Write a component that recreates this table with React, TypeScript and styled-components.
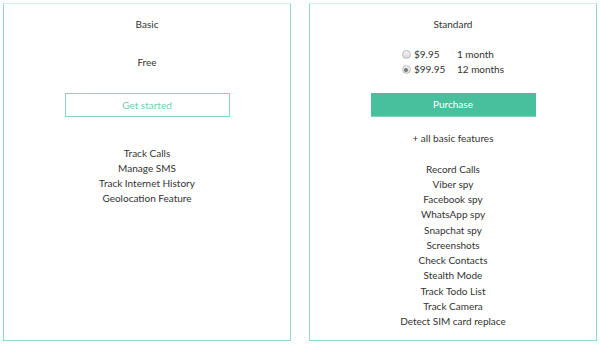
import React, { useState } from "react";
import styled, { createGlobalStyle, css } from "styled-components";

const GlobalStyle = createGlobalStyle`
  html, body {
    margin: 0;
    padding: 0;
    background: #fff;
  }
  body {
    font-family: Lato, "Open Sans", "Liberation Sans", sans-serif;
    color: #333;
  }
`;

const basicFeatures = [
  "Track Calls",
  "Manage SMS",
  "Track Internet History",
  "Geolocation Feature",
];

const standardFeatures = [
  "Record Calls",
  "Viber spy",
  "Facebook spy",
  "WhatsApp spy",
  "Snapchat spy",
  "Screenshots",
  "Check Contacts",
  "Stealth Mode",
  "Track Todo List",
  "Track Camera",
  "Detect SIM card replace",
];

const plans = [
  { price: "$9.95", period: "1 month" },
  { price: "$99.95", period: "12 months" },
];

export default function App() {
  const [picked, setPicked] = useState(1);

  return (
    <>
      <GlobalStyle />
      <Page>
        <Card>
          <Title>Basic</Title>
          <PriceArea>
            <FreeLabel>Free</FreeLabel>
          </PriceArea>
          <Button variant="outline">Get started</Button>
          <Features top={28.5}>
            {basicFeatures.map((f) => (
              <li key={f}>{f}</li>
            ))}
          </Features>
        </Card>

        <Card>
          <Title>Standard</Title>
          <PriceArea>
            <PlanList>
              {plans.map((p, i) => (
                <PlanRow key={p.price} onClick={() => setPicked(i)}>
                  <Radio checked={picked === i} />
                  <Price>{p.price}</Price>
                  <span>{p.period}</span>
                </PlanRow>
              ))}
            </PlanList>
          </PriceArea>
          <Button variant="solid">Purchase</Button>
          <Note>+ all basic features</Note>
          <Features top={16}>
            {standardFeatures.map((f) => (
              <li key={f}>{f}</li>
            ))}
          </Features>
        </Card>
      </Page>
    </>
  );
}

const Page = styled.div`
  display: flex;
  gap: 18px;
  padding: 3px;
  width: 600px;
  height: 344px;
  box-sizing: border-box;
`;

const Card = styled.div`
  flex: 0 0 288px;
  height: 338px;
  box-sizing: border-box;
  border: 1px solid #8fdac3;
  border-top-color: #d3f1e7;
  display: flex;
  flex-direction: column;
  align-items: center;
  padding-top: 12.5px;
  font-size: 10px;
  line-height: 15px;
`;

const Title = styled.div`
  color: #333;
`;

const PriceArea = styled.div`
  height: 61.5px;
  display: flex;
  flex-direction: column;
  justify-content: center;
  align-items: center;
`;

const FreeLabel = styled.div`
  color: #333;
`;

const PlanList = styled.div`
  display: flex;
  flex-direction: column;
`;

const PlanRow = styled.label`
  display: flex;
  align-items: center;
  white-space: nowrap;
  cursor: pointer;
  color: #333;
`;

const Radio = styled.span<{ checked: boolean }>`
  width: 7px;
  height: 7px;
  border-radius: 50%;
  border: 1px solid #bdbdbd;
  background: linear-gradient(#f4f4f4, #d8d8d8);
  margin-right: 3px;
  display: flex;
  align-items: center;
  justify-content: center;

  ${(p) =>
    p.checked &&
    css`
      &::after {
        content: "";
        width: 4px;
        height: 4px;
        border-radius: 50%;
        background: #777;
      }
    `}
`;

const Price = styled.span`
  width: 43px;
`;

const Button = styled.div<{ variant: "outline" | "solid" }>`
  width: 165px;
  height: 24px;
  box-sizing: border-box;
  display: flex;
  align-items: center;
  justify-content: center;
  font-size: 10px;
  cursor: pointer;

  ${(p) =>
    p.variant === "outline"
      ? css`
          border: 1px solid #86d7bd;
          color: #72cfb1;
          background: #fff;
        `
      : css`
          background: #48bf9d;
          border-bottom: 1px solid #7fd3b9;
          color: #fff;
        `}
`;

const Note = styled.div`
  margin-top: 13.5px;
  color: #333;
`;

const Features = styled.ul<{ top: number }>`
  list-style: none;
  margin: ${(p) => p.top}px 0 0;
  padding: 0;
  text-align: center;
  line-height: 15.25px;
  color: #333;
`;
